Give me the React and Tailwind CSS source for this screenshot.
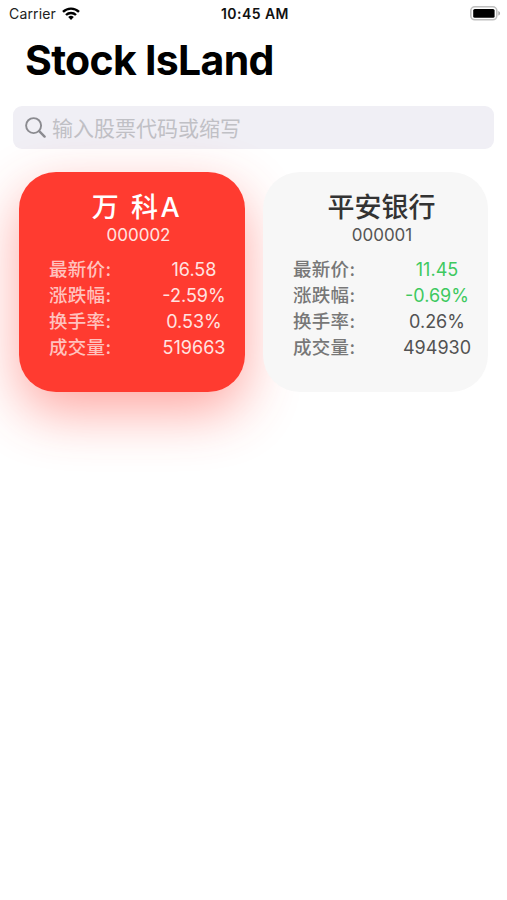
// App.jsx
import React, { useState } from 'react';

const stocks = [
  {
    name: '万 科A',
    code: '000002',
    price: '16.58',
    change: '-2.59%',
    turnover: '0.53%',
    volume: '519663'
  },
  {
    name: '平安银行',
    code: '000001',
    price: '11.45',
    change: '-0.69%',
    turnover: '0.26%',
    volume: '494930'
  }
];

const fields = [
  { key: 'price', label: '最新价:' },
  { key: 'change', label: '涨跌幅:' },
  { key: 'turnover', label: '换手率:' },
  { key: 'volume', label: '成交量:' }
];

const StatusBar = () => (
  <div className="grid h-[26px] grid-cols-3 items-center pl-[9px] pr-[6px] text-[14px]">
    <div className="flex items-center gap-[6px] text-[#222]">
      <span className="tracking-[0.15px]">Carrier</span>
      <svg width="18" height="13" viewBox="0 0 18 13" fill="none" stroke="#000" strokeWidth="2.4">
        <path d="M1 4.9a11.4 11.4 0 0 1 16 0" />
        <path d="M4 8a7.2 7.2 0 0 1 10 0" />
        <path d="M9 13 6.2 10.1a4 4 0 0 1 5.6 0Z" fill="#000" stroke="none" />
      </svg>
    </div>
    <span className="text-center font-semibold tracking-[0.45px] whitespace-nowrap text-[#111]">10:45 AM</span>
    <svg className="justify-self-end" width="31" height="15" viewBox="0 0 31 15">
      <rect x="0.8" y="0.8" width="26" height="13" rx="4" fill="#fff" stroke="#bfbfbf" strokeWidth="1.6" />
      <rect x="3.2" y="3" width="21.4" height="8.8" rx="1.6" fill="#000" />
      <path d="M28.3 5v4.6c2.4-.8 2.4-3.8 0-4.6Z" fill="#aaa" />
    </svg>
  </div>
);

const SearchBar = ({ value, onChange }) => (
  <div className="mx-[13px] flex h-[43px] items-center gap-[6px] rounded-[9px] bg-[#f0eff5] pl-3">
    <svg width="21" height="21" viewBox="0 0 21 21" fill="none" stroke="#8b8b90" strokeLinecap="round">
      <circle cx="8.6" cy="8.6" r="7.5" strokeWidth="1.9" />
      <path d="m14.2 14.2 5.4 5.4" strokeWidth="2.4" />
    </svg>
    <input
      type="text"
      placeholder="输入股票代码或缩写"
      value={value}
      onChange={e => onChange(e.target.value)}
      className="flex-1 bg-transparent pt-[2px] text-[21px] outline-none placeholder:text-[#c0c0c5]"
    />
  </div>
);

const StockCard = ({ stock, selected, onSelect }) => {
  const valueColor = key => {
    if (selected) return 'text-[#ffe3e1]';
    return key === 'price' || key === 'change' ? 'text-[#3ec95f]' : 'text-[#525252]';
  };

  return (
    <div
      onClick={onSelect}
      className={
        selected
          ? 'h-[220px] w-[226px] rounded-[37px] bg-[#ff3b30] pt-[18px] shadow-[0_20px_54px_rgba(255,59,48,0.45)]'
          : 'relative h-[220px] w-[225px] rounded-[37px] bg-[#f7f7f7] pt-[18px]'
      }
    >
      <h2 className={`h-[35px] whitespace-pre text-center text-[27px] leading-9 font-medium ${selected ? 'pl-[10px] tracking-[2.6px] text-white' : 'pl-[12px] text-[#333]'}`}>
        {stock.name}
      </h2>
      <p className={`h-[31px] text-center text-[17px] leading-5 ${selected ? 'pl-[13px] text-[#ffe3e1]' : 'pl-[13px] text-[#555]'}`}>
        {stock.code}
      </p>
      {fields.map(f => (
        <div key={f.key} className="flex h-[26px] items-center justify-between pl-[30px] pr-[16px]">
          <span className={`pt-[2px] text-[18.5px] tracking-[0.3px] font-medium ${selected ? 'text-[#ffc2be]' : 'text-[#777]'}`}>{f.label}</span>
          <span className={`w-[70px] text-center text-[18px] ${valueColor(f.key)}`}>{stock[f.key]}</span>
        </div>
      ))}
    </div>
  );
};

const App = () => {
  const [query, setQuery] = useState('');
  const [selected, setSelected] = useState('000002');

  return (
    <div className="min-h-screen w-full overflow-hidden bg-white font-['Inter','Noto_Sans_CJK_SC',sans-serif]">
      <StatusBar />
      <h1 className="h-[80px] pl-[25px] text-[41px] leading-[69px] font-bold tracking-[-0.7px] text-black">
        Stock IsLand
      </h1>
      <SearchBar value={query} onChange={setQuery} />
      <div className="mt-[23px] flex gap-[18px] pl-[19px]">
        {stocks.map(s => (
          <StockCard
            key={s.code}
            stock={s}
            selected={s.code === selected}
            onSelect={() => setSelected(s.code)}
          />
        ))}
      </div>
    </div>
  );
};

export default App;
